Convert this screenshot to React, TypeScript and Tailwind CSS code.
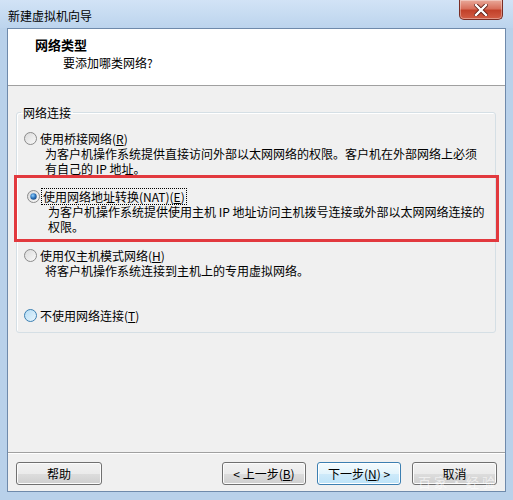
import React from "react";

const font = "font-['Noto_Sans_CJK_SC','Noto_Sans',sans-serif]";

type RadioState = "off" | "on" | "hover";

function Radio({ state }: { state: RadioState }) {
  const ring = state === "hover" ? "#3c7fb1" : "#8a8a8a";
  const fill = state === "hover" ? "url(#rHover)" : "url(#rOff)";
  return (
    <svg width="13" height="13" viewBox="0 0 13 13" className="shrink-0">
      <defs>
        <linearGradient id="rOff" x1="0" y1="0" x2="1" y2="1">
          <stop offset="0" stopColor="#d9d9d9" />
          <stop offset="1" stopColor="#fbfbfb" />
        </linearGradient>
        <linearGradient id="rHover" x1="0" y1="0" x2="1" y2="1">
          <stop offset="0" stopColor="#b3dcf5" />
          <stop offset="1" stopColor="#eaf6fd" />
        </linearGradient>
        <radialGradient id="rDot" cx="0.4" cy="0.35" r="0.7">
          <stop offset="0" stopColor="#8ed0ff" />
          <stop offset="0.6" stopColor="#2a6fb8" />
          <stop offset="1" stopColor="#1a4a80" />
        </radialGradient>
      </defs>
      <circle cx="6.5" cy="6.5" r="6" fill={fill} stroke={ring} strokeWidth="1" />
      {state === "on" && <circle cx="6.5" cy="6.5" r="3.2" fill="url(#rDot)" />}
    </svg>
  );
}

function Option({
  state,
  children,
  focus,
}: {
  state: RadioState;
  children: React.ReactNode;
  focus?: boolean;
}) {
  return (
    <div className="flex items-center pl-[7px] gap-[3px] h-[15px]">
      <Radio state={state} />
      <span className={focus ? "outline-1 outline-dotted outline-black px-[1px] -ml-[1px]" : ""}>
        {children}
      </span>
    </div>
  );
}

function Desc({ lines }: { lines: string[] }) {
  return (
    <div className="pl-[28px]">
      {lines.map((l, i) => (
        <div key={i} className="whitespace-nowrap">
          {l}
        </div>
      ))}
    </div>
  );
}

function Btn({
  children,
  primary,
  className = "",
}: {
  children: React.ReactNode;
  primary?: boolean;
  className?: string;
}) {
  return (
    <div
      className={
        "h-[23px] flex items-center justify-center rounded-[3px] border " +
        (primary
          ? "border-[#3c7fb1] bg-[linear-gradient(180deg,#f4fbfe_0%,#e3f4fc_50%,#cfeafa_51%,#bde3f8_100%)] shadow-[inset_0_0_0_1px_#ffffff] "
          : "border-[#707070] bg-[linear-gradient(180deg,#f2f2f2_0%,#ebebeb_50%,#dddddd_51%,#cfcfcf_100%)] shadow-[inset_0_0_0_1px_#fcfcfc] ") +
        className
      }
    >
      {children}
    </div>
  );
}

function CloseButton() {
  return (
    <div className="mr-[10px] w-[44px] h-[20px] rounded-b-[5px] border border-t-0 border-[#7a2d24] bg-[linear-gradient(180deg,#e9a99a_0%,#d8705c_45%,#c2412a_55%,#d25d45_100%)] flex items-center justify-center shadow-[inset_0_0_0_1px_rgba(255,255,255,0.35)]">
      <svg width="14" height="12" viewBox="0 0 14 12">
        <path d="M2 1 L12 11 M12 1 L2 11" stroke="#5a1a12" strokeWidth="4" strokeLinecap="square" />
        <path d="M2 1 L12 11 M12 1 L2 11" stroke="#ffffff" strokeWidth="2.4" strokeLinecap="square" />
      </svg>
    </div>
  );
}

export default function App() {
  return (
    <div
      className={`w-[513px] h-[500px] flex flex-col bg-[#b9d1ea] text-[12px] leading-[15px] text-black ${font} overflow-hidden relative`}
    >
      <div className="h-[28px] shrink-0 flex items-start justify-between bg-[linear-gradient(180deg,#d2e3f6,#bcd4ed)]">
        <span className="pl-[8px] pt-[8px]">新建虚拟机向导</span>
        <CloseButton />
      </div>

      <div className="flex-1 flex flex-col px-[7px] pb-[8px]">
        <div className="flex-1 flex flex-col border border-[#6f8aab] bg-[#f0f0f0]">
          <div className="h-[57px] shrink-0 bg-white border-b border-[#a0a0a0] pt-[8px]">
            <div className="pl-[27px] text-[13px] font-bold">网络类型</div>
            <div className="pl-[55px] mt-[3px]">要添加哪类网络?</div>
          </div>

          <div className="flex-1">
            <fieldset className="ml-[8px] mr-[9px] mt-[19px] border border-[#d5dfe5] rounded-[3px] pt-[11px] pb-[9px] shadow-[inset_1px_1px_0_#ffffff]">
              <legend className="ml-[4px] px-[2px]">网络连接</legend>

              <Option state="off">
                使用桥接网络(<span className="underline">R</span>)
              </Option>
              <Desc
                lines={[
                  "为客户机操作系统提供直接访问外部以太网网络的权限。客户机在外部网络上必须",
                  "有自己的 IP 地址。",
                ]}
              />

              <div className="-ml-[3px] -mr-[4px] -mt-[1px] border-[3px] border-[#e2393e] pl-[3px] pt-[11px] pb-[5px]">
                <Option state="on" focus>
                  使用网络地址转换(NAT)(<span className="underline">E</span>)
                </Option>
                <Desc
                  lines={[
                    "为客户机操作系统提供使用主机 IP 地址访问主机拨号连接或外部以太网网络连接的",
                    "权限。",
                  ]}
                />
              </div>

              <div className="mt-[6px]">
                <Option state="off">
                  使用仅主机模式网络(<span className="underline">H</span>)
                </Option>
                <Desc lines={["将客户机操作系统连接到主机上的专用虚拟网络。"]} />
              </div>

              <div className="mt-[30px]">
                <Option state="hover">
                  不使用网络连接(<span className="underline">T</span>)
                </Option>
              </div>
            </fieldset>
          </div>

          <div className="shrink-0 border-t border-[#a0a0a0] shadow-[inset_0_1px_0_#ffffff] pt-[9px] pb-[6px] pl-[8px] pr-[8px] flex items-center">
            <Btn className="w-[86px]">帮助</Btn>
            <div className="flex-1" />
            <Btn className="w-[84px]">
              &lt; 上一步(<span className="underline">B</span>)
            </Btn>
            <Btn primary className="w-[84px] ml-[11px]">
              下一步(<span className="underline">N</span>) &gt;
            </Btn>
            <Btn className="w-[85px] ml-[11px]">取消</Btn>
          </div>
        </div>
      </div>

      <div className="absolute left-[418px] top-[474px] text-[13px] text-white/60 tracking-[3px] pointer-events-none">
        百家·经验
      </div>
    </div>
  );
}
